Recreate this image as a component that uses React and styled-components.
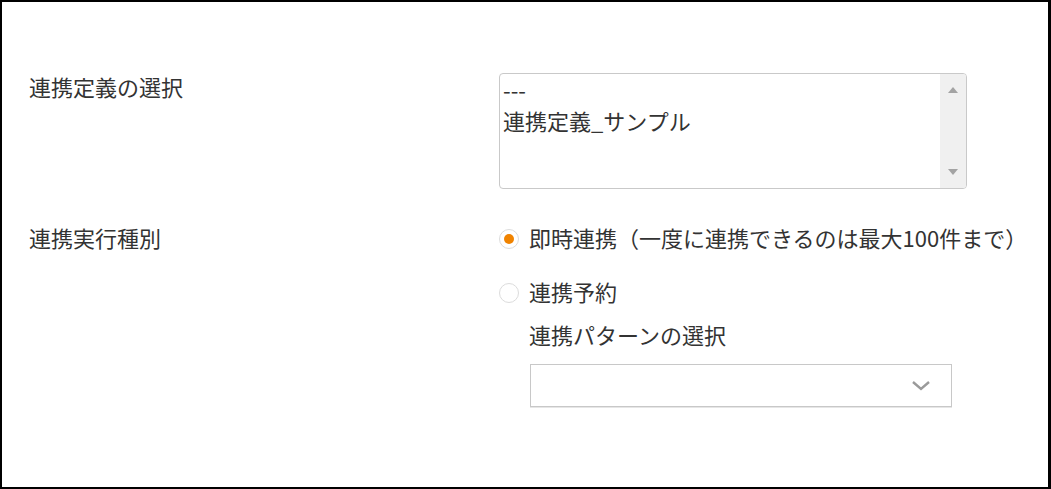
import React from "react";
import styled, { createGlobalStyle } from "styled-components";

const GlobalStyle = createGlobalStyle`
  html, body { margin: 0; padding: 0; background: #fff; }
  body { font-family: "Noto Sans CJK JP", "Noto Sans", sans-serif; color: #333; }
`;

const Frame = styled.div`
  width: 1051px;
  height: 489px;
  box-sizing: border-box;
  border: 2px solid #000;
  border-right-width: 3px;
  padding: 71px 0 0 27px;
  display: grid;
  grid-template-columns: 470px 1fr;
  row-gap: 35px;
  align-content: start;
`;

const Label = styled.div`
  font-size: 22px;
  line-height: 26px;
  color: #333;
  white-space: nowrap;
`;

const ListBox = styled.div`
  width: 468px;
  height: 116px;
  box-sizing: border-box;
  border: 1px solid #c9c9c9;
  border-radius: 4px;
  display: flex;
  overflow: hidden;
  background: #fff;
`;

const Options = styled.div`
  flex: 1;
  padding: 0 0 0 3px;
`;

const Option = styled.div`
  font-size: 22px;
  line-height: 31px;
  color: #333;
  white-space: nowrap;
`;

const ScrollBar = styled.div`
  width: 26px;
  background: #f0f0f0;
  display: flex;
  flex-direction: column;
  align-items: center;
  justify-content: space-between;
  padding: 13px 0 13px;
`;

const Arrow = styled.div`
  width: 0;
  height: 0;
  border-left: 5px solid transparent;
  border-right: 5px solid transparent;
  ${(p) =>
    p.$down
      ? "border-top: 6px solid #a3a3a3;"
      : "border-bottom: 6px solid #a3a3a3;"}
`;

const Column = styled.div`
  display: flex;
  flex-direction: column;
  align-items: flex-start;
`;

const RadioRow = styled.label`
  display: flex;
  align-items: center;
  gap: 10px;
  height: 30px;
  margin-top: ${(p) => p.$gap || 0}px;
  font-size: 22px;
  color: #333;
  white-space: nowrap;
`;

const RadioText = styled.span`
  line-height: 30px;
  margin-bottom: 4px;
`;

const RadioCircle = styled.span`
  width: 20px;
  height: 20px;
  box-sizing: border-box;
  border: 1px solid #dcdcdc;
  border-radius: 50%;
  display: flex;
  align-items: center;
  justify-content: center;
  background: #fff;
  &::after {
    content: "";
    width: 10px;
    height: 10px;
    border-radius: 50%;
    background: ${(p) => (p.$checked ? "#f08300" : "transparent")};
  }
`;

const SubLabel = styled.div`
  margin-top: 11px;
  padding-left: 30px;
  font-size: 22px;
  line-height: 30px;
  color: #333;
  white-space: nowrap;
`;

const Dropdown = styled.div`
  margin: 15px 0 0 31px;
  width: 422px;
  height: 43px;
  box-sizing: border-box;
  border: 1px solid #c8c8c8;
  box-shadow: 0 1px 0 #e6e6e6;
  display: flex;
  align-items: center;
  justify-content: flex-end;
  padding-right: 20px;
  background: #fff;
`;

export default function App() {
  return (
    <>
      <GlobalStyle />
      <Frame>
        <Label>連携定義の選択</Label>
        <ListBox>
          <Options>
            <Option>---</Option>
            <Option>連携定義_サンプル</Option>
          </Options>
          <ScrollBar>
            <Arrow />
            <Arrow $down />
          </ScrollBar>
        </ListBox>

        <Label>連携実行種別</Label>
        <Column>
          <RadioRow>
            <RadioCircle $checked />
            <RadioText>即時連携（一度に連携できるのは最大100件まで）</RadioText>
          </RadioRow>
          <RadioRow $gap={24}>
            <RadioCircle />
            <RadioText>連携予約</RadioText>
          </RadioRow>
          <SubLabel>連携パターンの選択</SubLabel>
          <Dropdown>
            <svg width="20" height="11" viewBox="0 0 20 11">
              <path d="M2 2 L10 9 L18 2" fill="none" stroke="#9a9a9a" strokeWidth="2.4" />
            </svg>
          </Dropdown>
        </Column>
      </Frame>
    </>
  );
}
